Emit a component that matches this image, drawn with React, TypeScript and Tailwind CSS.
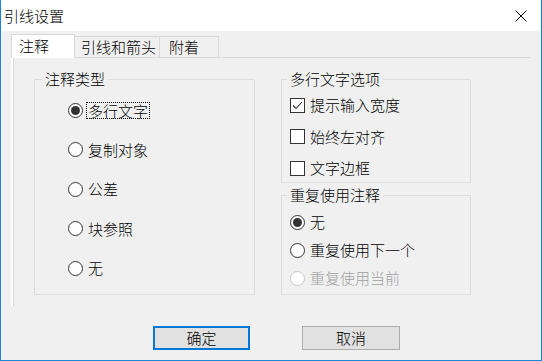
import React from "react";

function Radio({ checked = false, disabled = false }: { checked?: boolean; disabled?: boolean }) {
  return (
    <span
      className={
        "flex h-[15px] w-[15px] shrink-0 items-center justify-center rounded-full border bg-white " +
        (disabled ? "border-[#c6c6c6]" : "border-[#333333]")
      }
    >
      {checked && <span className="h-[9px] w-[9px] rounded-full bg-[#333333]" />}
    </span>
  );
}

function Checkbox({ checked = false }: { checked?: boolean }) {
  return (
    <span className="flex h-[15px] w-[15px] shrink-0 items-center justify-center border border-[#333333] bg-white">
      {checked && (
        <svg width="13" height="13" viewBox="0 0 13 13">
          <polyline points="2,6.5 5,9.5 11,3" fill="none" stroke="#333333" strokeWidth="1.1" />
        </svg>
      )}
    </span>
  );
}

export default function App() {
  return (
    <div className="flex h-[361px] w-[542px] flex-col border-x border-b border-[#1c84d8] bg-[#f0f0f0] font-['Noto_Sans_CJK_SC',sans-serif] text-[15px] font-light leading-[20px] text-black">
      {/* title bar */}
      <div className="flex h-[31px] shrink-0 items-center justify-between bg-white pl-[3px] pr-[14px]">
        <span>引线设置</span>
        <svg width="12" height="12" viewBox="0 0 12 12">
          <path d="M0.5 0.5 L11.5 11.5 M11.5 0.5 L0.5 11.5" stroke="#000" strokeWidth="1" />
        </svg>
      </div>

      <div className="flex flex-1 flex-col pl-[10px] pt-[3px]">
        {/* tabs */}
        <div className="flex h-[23px] items-start">
          <div className="relative z-10 -mb-px h-[24px] w-[64px] border-x border-t border-[#d9d9d9] bg-white pl-[7px] pt-[1px]">
            注释
          </div>
          <div className="mt-[2px] h-[21px] w-[85px] border-r border-t border-[#d9d9d9] pl-[6px]">
            引线和箭头
          </div>
          <div className="mt-[2px] h-[21px] w-[59px] border-r border-t border-[#d9d9d9] pl-[9px]">
            附着
          </div>
        </div>

        {/* panel */}
        <div className="flex h-[249px] w-[519px] border-l-2 border-t border-[#d9d9d9] border-l-white pl-[21px] pt-[11px] shadow-[inset_1px_0_0_#d9d9d9]">
          <fieldset className="h-[226px] w-[221px] border border-[#dcdcdc]">
            <legend className="ml-[7px] px-[3px]">注释类型</legend>
            <div className="flex flex-col gap-[19.5px] pl-[33px] pt-[11px]">
              <div className="flex h-[20px] items-center">
                <Radio checked />
                <span className="ml-[3px] border border-dotted border-black px-[1px] leading-[15px]">多行文字</span>
              </div>
              <div className="flex h-[20px] items-center">
                <Radio />
                <span className="ml-[5px]">复制对象</span>
              </div>
              <div className="flex h-[20px] items-center">
                <Radio />
                <span className="ml-[5px]">公差</span>
              </div>
              <div className="flex h-[20px] items-center">
                <Radio />
                <span className="ml-[5px]">块参照</span>
              </div>
              <div className="flex h-[20px] items-center">
                <Radio />
                <span className="ml-[5px]">无</span>
              </div>
            </div>
          </fieldset>

          <div className="ml-[26px] flex flex-col">
            <fieldset className="h-[114px] w-[190px] border border-[#dcdcdc]">
              <legend className="ml-[5px] px-[3px]">多行文字选项</legend>
              <div className="flex flex-col gap-[11.5px] pl-[8px] pt-[6px]">
                <div className="flex h-[20px] items-center">
                  <Checkbox checked />
                  <span className="ml-[5px]">提示输入宽度</span>
                </div>
                <div className="flex h-[20px] items-center">
                  <Checkbox />
                  <span className="ml-[5px]">始终左对齐</span>
                </div>
                <div className="flex h-[20px] items-center">
                  <Checkbox />
                  <span className="ml-[5px]">文字边框</span>
                </div>
              </div>
            </fieldset>

            <fieldset className="mt-[2px] h-[110px] w-[190px] border border-[#dcdcdc]">
              <legend className="ml-[5px] px-[3px]">重复使用注释</legend>
              <div className="flex flex-col gap-[8px] pl-[8px] pt-[7px]">
                <div className="flex h-[20px] items-center">
                  <Radio checked />
                  <span className="ml-[5px]">无</span>
                </div>
                <div className="flex h-[20px] items-center">
                  <Radio />
                  <span className="ml-[5px]">重复使用下一个</span>
                </div>
                <div className="flex h-[20px] items-center text-[#a0a0a0]">
                  <Radio disabled />
                  <span className="ml-[5px]">重复使用当前</span>
                </div>
              </div>
            </fieldset>
          </div>
        </div>

        {/* buttons */}
        <div className="ml-[142px] mt-[20px] flex gap-[52px]">
          <button className="flex h-[24px] w-[97px] items-center justify-center border-2 border-[#0078d7] bg-[#e1e1e1]">
            确定
          </button>
          <button className="flex h-[24px] w-[98px] items-center justify-center border border-[#adadad] bg-[#e1e1e1]">
            取消
          </button>
        </div>
      </div>
    </div>
  );
}
